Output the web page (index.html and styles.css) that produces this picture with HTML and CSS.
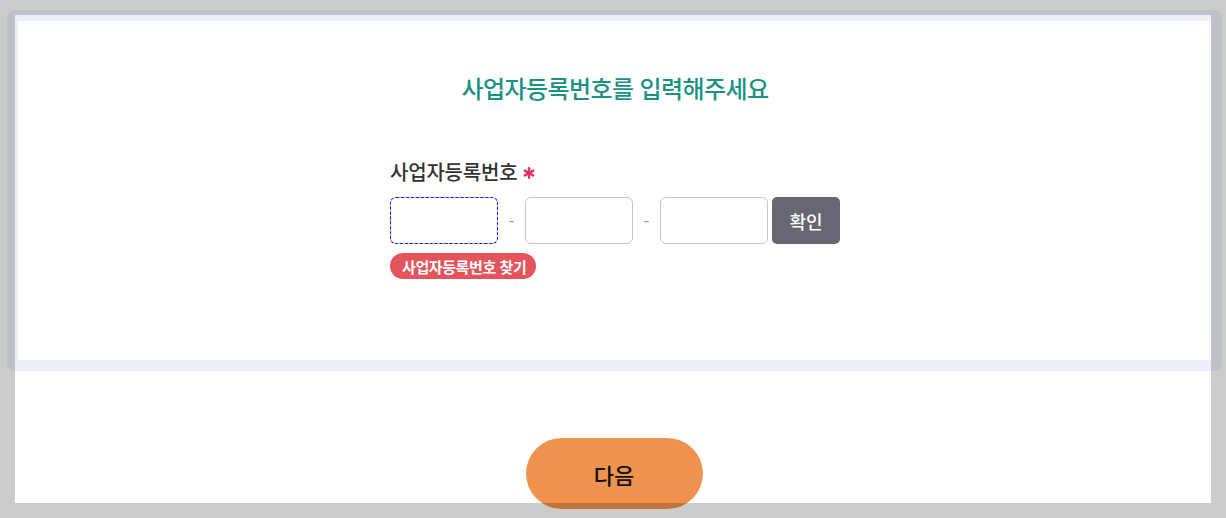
FILE: index.html
```html
<!DOCTYPE html>
<html lang="ko">
<head>
<meta charset="utf-8">
<title>사업자등록번호 입력</title>
<link rel="stylesheet" href="styles.css">
</head>
<body>
<main class="page">
  <section class="card">
    <h1 class="title">사업자등록번호를 입력해주세요</h1>
    <form class="form">
      <label class="label" for="biz1">사업자등록번호 <svg class="req" viewBox="0 0 12 12" width="12" height="12" aria-hidden="true"><g stroke="#e5335f" stroke-width="2.4" stroke-linecap="round"><line x1="6" y1="1.2" x2="6" y2="10.8"/><line x1="1.8" y1="3.6" x2="10.2" y2="8.4"/><line x1="1.8" y1="8.4" x2="10.2" y2="3.6"/></g></svg></label>
      <div class="row">
        <input class="field focused" id="biz1" type="text">
        <span class="dash">-</span>
        <input class="field" type="text">
        <span class="dash">-</span>
        <input class="field" type="text">
        <button class="confirm" type="button">확인</button>
      </div>
      <a class="find" href="#">사업자등록번호 찾기</a>
    </form>
  </section>
  <div class="actions">
    <button class="next" type="button">다음</button>
  </div>
</main>
<div class="highlight"></div>
<div class="frame"></div>
</body>
</html>
```

FILE: styles.css
```css
html, body {
  margin: 0;
  padding: 0;
}
body {
  width: 1226px;
  height: 518px;
  overflow: hidden;
  background: #ffffff;
  font-family: "Noto Sans CJK KR", "Noto Sans", sans-serif;
  color: #333333;
  position: relative;
}
.page {
  padding-top: 21px;
}
.card {
  height: 339px;
  padding-top: 50px;
  box-sizing: border-box;
  background: #ffffff;
}
.title {
  margin: 0;
  padding-left: 4px;
  text-align: center;
  font-size: 24px;
  line-height: 34px;
  font-weight: 500;
  letter-spacing: -0.6px;
  color: #1a9282;
}
.form {
  width: 450px;
  margin: 53px 0 0 calc(50% - 223px);
  display: flex;
  flex-direction: column;
  align-items: flex-start;
}
.label {
  display: flex;
  align-items: center;
  gap: 6px;
  font-size: 20px;
  line-height: 28px;
  font-weight: 500;
  letter-spacing: -0.2px;
  color: #333333;
}
.req {
  display: block;
  margin-top: 2px;
}
.row {
  margin-top: 11px;
  display: flex;
  align-items: center;
  height: 47px;
}
.field {
  width: 108px;
  height: 47px;
  box-sizing: border-box;
  border: 1px solid #c4c4c4;
  border-radius: 6px;
  background: #ffffff;
  margin: 0;
  padding: 0 10px;
  font: inherit;
}
.field.focused {
  outline: 1px dashed #1414f0;
  outline-offset: -1px;
}
.dash {
  width: 27px;
  text-align: center;
  color: #999999;
  font-size: 17px;
}
.confirm {
  margin-left: 4px;
  width: 68px;
  height: 47px;
  border: 0;
  border-radius: 5px;
  background: #676672;
  color: #ffffff;
  font-family: inherit;
  font-size: 18px;
  font-weight: 500;
  padding: 0;
}
.find {
  margin-top: 9px;
  display: inline-flex;
  align-items: center;
  height: 26px;
  padding: 0 10px 0 12px;
  border-radius: 13px;
  background: #e5535b;
  color: #ffffff;
  text-decoration: none;
  font-size: 15px;
  font-weight: 700;
  letter-spacing: -0.4px;
}
.actions {
  display: flex;
  justify-content: center;
  margin-top: 78px;
  padding-left: 2px;
}
.next {
  width: 177px;
  height: 71px;
  border: 0;
  border-radius: 36px;
  background: #f0934f;
  color: #111111;
  font-family: inherit;
  font-size: 22px;
  font-weight: 500;
  padding: 0;
}
.highlight {
  position: absolute;
  left: 7px;
  top: 10px;
  width: 1215px;
  height: 361px;
  box-sizing: border-box;
  border: 11px solid rgba(71, 112, 163, 0.1);
  border-radius: 8px;
  pointer-events: none;
  z-index: 3;
}
.frame {
  position: absolute;
  inset: 0;
  border: 15px solid rgba(0, 0, 0, 0.2);
  pointer-events: none;
  z-index: 2;
}
```
